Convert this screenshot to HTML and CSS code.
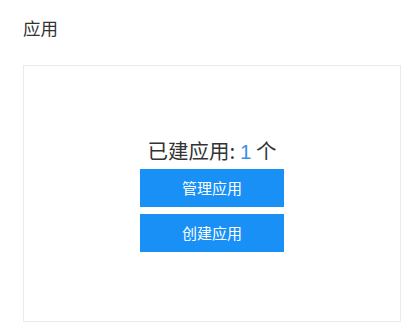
FILE: index.html
```html
<!DOCTYPE html>
<html lang="zh-CN">
<head>
<meta charset="utf-8">
<title>应用</title>
<link rel="stylesheet" href="styles.css">
</head>
<body>
<div class="page">
  <h1 class="title">应用</h1>
  <div class="card">
    <div class="summary">已建应用: <span class="count">1</span> 个</div>
    <button class="btn">管理应用</button>
    <button class="btn">创建应用</button>
  </div>
</div>
</body>
</html>
```
FILE: styles.css
```css
html, body {
  margin: 0;
  padding: 0;
  background: #ffffff;
}
.page {
  font-family: "Noto Sans CJK SC", "Noto Sans", sans-serif;
  color: #333333;
  padding: 16px 8px 0 23px;
}
.title {
  margin: 0 0 25px 0;
  font-size: 17.5px;
  font-weight: normal;
  line-height: 24px;
  color: #333333;
}
.card {
  box-sizing: border-box;
  height: 257px;
  border: 1px solid #ebebeb;
  display: flex;
  flex-direction: column;
  align-items: center;
  justify-content: center;
}
.summary {
  height: 28px;
  font-size: 20.5px;
  line-height: 28px;
  margin-bottom: 5px;
  color: #333333;
}
.count {
  font-family: "Liberation Sans", "Noto Sans CJK SC", sans-serif;
  line-height: 1;
  color: #3d8fe6;
}
.btn {
  width: 144px;
  height: 38px;
  border: none;
  padding: 0;
  background: #1890f5;
  color: #ffffff;
  font-family: "Noto Sans CJK SC", "Noto Sans", sans-serif;
  font-size: 15px;
  line-height: 38px;
  cursor: pointer;
}
.btn + .btn {
  margin-top: 7px;
}
```
